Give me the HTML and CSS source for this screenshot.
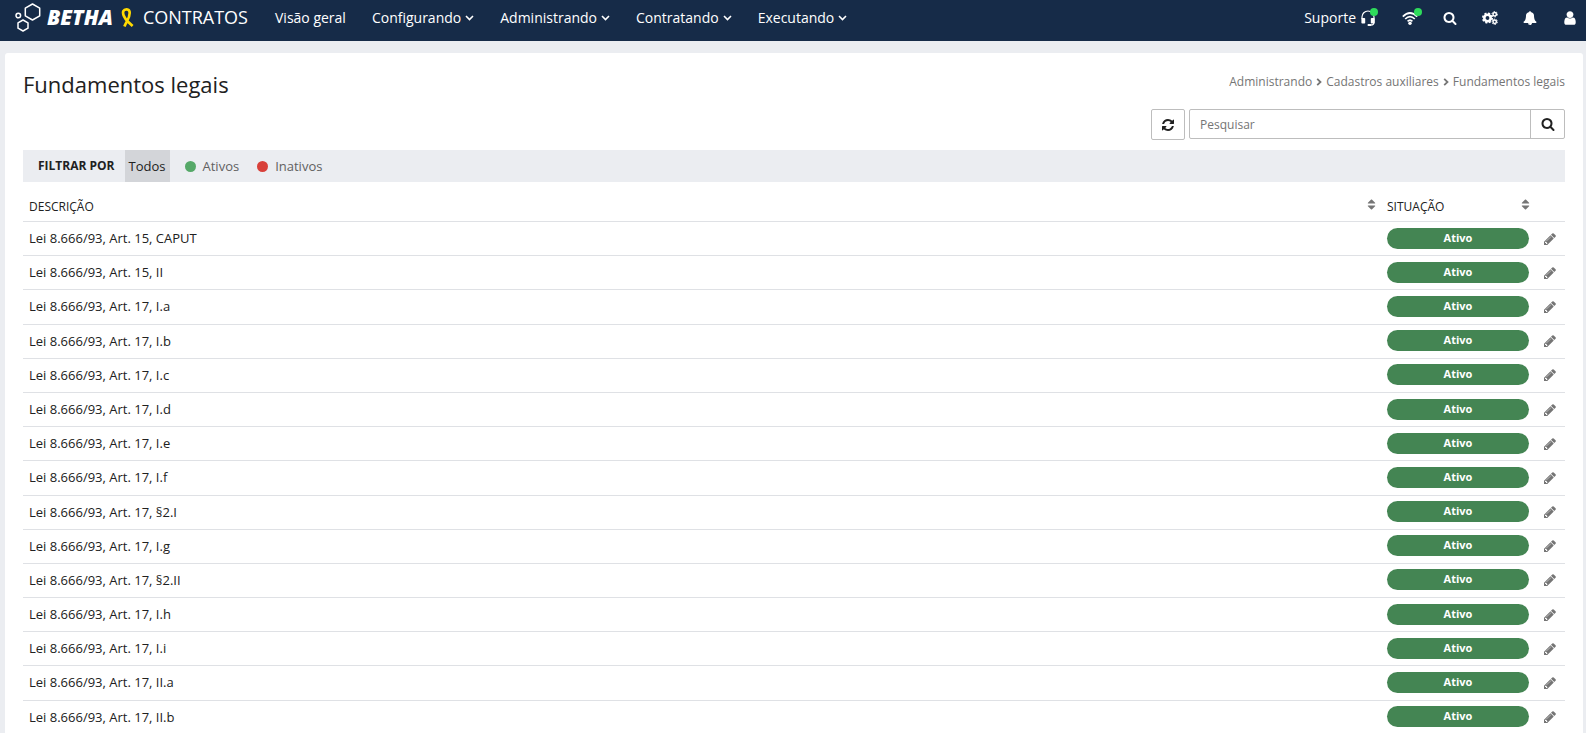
FILE: index.html
```
<!DOCTYPE html>
<html lang="pt-BR">
<head>
<meta charset="utf-8">
<title>Contratos - Fundamentos legais</title>
<link rel="stylesheet" href="styles.css">
</head>
<body>
<svg class="sprite" aria-hidden="true">
  <symbol id="i-search" viewBox="0 0 1792 1792"><path d="M1216 832q0-185-131.500-316.500t-316.500-131.500-316.500 131.500-131.500 316.500 131.500 316.500 316.500 131.500 316.500-131.500 131.500-316.500zm512 832q0 52-38 90t-90 38q-54 0-90-38l-343-342q-179 124-399 124-143 0-273.500-55.500t-225-150-150-225-55.500-273.500 55.500-273.500 150-225 225-150 273.500-55.500 273.500 55.500 225 150 150 225 55.500 273.500q0 220-124 399l343 343q37 37 37 90z"/></symbol>
  <symbol id="i-user" viewBox="0 0 1792 1792"><path d="M1536 1399q0 109-62.500 187t-150.500 78h-854q-88 0-150.500-78t-62.500-187q0-85 8.500-160.500t31.500-152 58.500-131 94-89 134.500-34.500q131 128 313 128t313-128q76 0 134.500 34.500t94 89 58.500 131 31.500 152 8.500 160.500zm-256-887q0 159-112.500 271.500t-271.500 112.500-271.500-112.500-112.500-271.500 112.500-271.500 271.500-112.500 271.500 112.500 112.500 271.500z"/></symbol>
  <symbol id="i-pencil" viewBox="0 0 1792 1792"><path d="M491 1536l91-91-235-235-91 91v107h128v128h107zm523-928q0-22-22-22-10 0-17 7l-542 542q-7 7-7 17 0 22 22 22 10 0 17-7l542-542q7-7 7-17zm-54-192l416 416-832 832h-416v-416zm683 96q0 53-37 90l-166 166-416-416 166-165q36-38 90-38 53 0 91 38l235 234q37 39 37 91z"/></symbol>
  <symbol id="i-refresh" viewBox="0 0 1792 1792"><path d="M1639 1056q0 5-1 7-64 268-268 434.500t-478 166.500q-146 0-282.500-55t-243.500-157l-129 129q-19 19-45 19t-45-19-19-45v-448q0-26 19-45t45-19h448q26 0 45 19t19 45-19 45l-137 137q71 66 161 102t187 36q134 0 250-65t186-179q11-17 53-117 8-23 30-23h192q13 0 22.500 9.500t9.500 22.500zm25-800v448q0 26-19 45t-45 19h-448q-26 0-45-19t-19-45 19-45l138-138q-148-137-349-137-134 0-250 65t-186 179q-11 17-53 117-8 23-30 23h-199q-13 0-22.500-9.500t-9.500-22.500v-7q65-268 270-434.500t480-166.500q146 0 284 55.500t245 156.500l130-129q19-19 45-19t45 19 19 45z"/></symbol>
  <symbol id="i-sort" viewBox="0 0 1792 1792"><path d="M1408 1088q0 26-19 45l-448 448q-19 19-45 19t-45-19l-448-448q-19-19-19-45t19-45 45-19h896q26 0 45 19t19 45zm0-384q0 26-19 45t-45 19h-896q-26 0-45-19t-19-45 19-45l448-448q19-19 45-19t45 19l448 448q19 19 19 45z"/></symbol>
  <symbol id="i-bell" viewBox="0 0 1792 1792"><path d="M912 1696q0-16-16-16-59 0-101.500-42.500t-42.500-101.500q0-16-16-16t-16 16q0 73 51.500 124.500t124.500 51.500q16 0 16-16zm816-288q0 52-38 90t-90 38h-448q0 106-75 181t-181 75-181-75-75-181h-448q-52 0-90-38t-38-90q50-42 91-88t85-119.500 74.500-158.500 50-206 19.500-260q0-152 117-282.500t307-158.500q-8-19-8-39 0-40 28-68t68-28 68 28 28 68q0 20-8 39 190 28 307 158.500t117 282.500q0 139 19.500 260t50 206 74.500 158.500 85 119.500 91 88z"/></symbol>
  <symbol id="i-down" viewBox="0 0 9 6"><path d="M1 1l3.500 3.500L8 1" fill="none" stroke="currentColor" stroke-width="1.600"/></symbol>
  <symbol id="i-right" viewBox="0 0 6 8"><path d="M1.200 .8L4.500 4 1.200 7.200" fill="none" stroke="currentColor" stroke-width="1.800"/></symbol>
  <symbol id="i-wifi" viewBox="0 0 16 14"><g fill="none" stroke="currentColor" stroke-width="1.700"><path d="M.8 5.600Q8-1.600 15.200 5.600"/><path d="M3.200 8Q8 3.200 12.800 8"/><path d="M5.600 10.300Q8 7.800 10.400 10.300"/></g><circle cx="8" cy="12.200" r="1.700"/></symbol>
  <symbol id="i-headset" viewBox="0 0 14 16"><path d="M1 9V7a6 6 0 0 1 12 0v5.500q0 2.500-3 2.500H7" fill="none" stroke="currentColor" stroke-width="1.200"/><rect x=".4" y="8" width="3.800" height="5.600" rx=".8"/><rect x="9.800" y="8" width="3.800" height="5.600" rx=".8"/><rect x="6.500" y="14" width="4" height="2" rx="1"/></symbol>
  <symbol id="i-cogs" viewBox="0 0 16 14"><g fill="none" stroke="currentColor"><circle cx="5.500" cy="7" r="3.200" stroke-width="2.600"/><circle cx="5.500" cy="7" r="4.700" stroke-width="1.700" stroke-dasharray="2.050 1.640"/><circle cx="12.700" cy="3.200" r="1.700" stroke-width="1.500"/><circle cx="12.700" cy="3.200" r="2.700" stroke-width="1" stroke-dasharray="1.500 1.320"/><circle cx="12.700" cy="10.800" r="1.700" stroke-width="1.500"/><circle cx="12.700" cy="10.800" r="2.700" stroke-width="1" stroke-dasharray="1.500 1.320"/></g></symbol>
</svg>

<header class="topbar">
  <a class="brand" href="#">
    <svg class="brand-mark" viewBox="0 0 26 29" aria-hidden="true"><g fill="none" stroke="#fff" stroke-width="1.500" stroke-linejoin="round"><path d="M17.500 1l7.200 4.200v7.600l-7.200 4.200-7.200-4.200V5.200z"/><path d="M8 17l5 2.800v5.400L8 28l-5-2.800v-5.400z"/><circle cx="3.300" cy="12.500" r="2.300"/></g></svg>
    <span class="brand-name">BETHA</span>
    <svg class="ribbon" viewBox="0 0 14 20" aria-hidden="true"><path d="M3.400 18.500C6 12 10 8.500 8.400 3.200 7.500.8 3.500.8 2.300 3.200 1 7 4.500 11 6.500 13.300L11.600 18" fill="none" stroke="#ffd900" stroke-width="2.700"/></svg>
    <span class="product">CONTRATOS</span>
  </a>
  <nav class="menu">
    <a href="#">Visão geral</a>
    <a href="#">Configurando <svg class="down"><use href="#i-down"/></svg></a>
    <a href="#">Administrando <svg class="down"><use href="#i-down"/></svg></a>
    <a href="#">Contratando <svg class="down"><use href="#i-down"/></svg></a>
    <a href="#">Executando <svg class="down"><use href="#i-down"/></svg></a>
  </nav>
  <div class="tools">
    <a class="support dotted" href="#">Suporte <svg class="icon-lg"><use href="#i-headset"/></svg></a>
    <button class="tool dotted" type="button" aria-label="Conexão"><svg class="icon-lg"><use href="#i-wifi"/></svg></button>
    <button class="tool" type="button" aria-label="Buscar"><svg class="icon"><use href="#i-search"/></svg></button>
    <button class="tool" type="button" aria-label="Configurações"><svg class="icon-lg"><use href="#i-cogs"/></svg></button>
    <button class="tool" type="button" aria-label="Notificações"><svg class="icon"><use href="#i-bell"/></svg></button>
    <button class="tool" type="button" aria-label="Usuário"><svg class="icon-lg"><use href="#i-user"/></svg></button>
  </div>
</header>

<main class="card">
  <div class="heading">
    <h1>Fundamentos legais</h1>
    <nav class="crumbs" aria-label="Caminho">
      <a href="#">Administrando</a><svg class="right"><use href="#i-right"/></svg><a href="#">Cadastros auxiliares</a><svg class="right"><use href="#i-right"/></svg><a href="#">Fundamentos legais</a>
    </nav>
  </div>
  <form class="search">
    <button class="refresh" type="button" aria-label="Atualizar"><svg class="icon"><use href="#i-refresh"/></svg></button>
    <div class="search-box">
      <input type="text" placeholder="Pesquisar" aria-label="Pesquisar">
      <button type="button" aria-label="Pesquisar"><svg class="icon"><use href="#i-search"/></svg></button>
    </div>
  </form>
  <div class="filter">
    <strong>FILTRAR POR</strong>
    <button class="active" type="button">Todos</button>
    <button type="button"><i class="dot green"></i>Ativos</button>
    <button type="button"><i class="dot red"></i>Inativos</button>
  </div>
  <table>
    <thead>
      <tr>
        <th><div class="sortable">DESCRIÇÃO<svg class="sort"><use href="#i-sort"/></svg></div></th>
        <th class="col-status"><div class="sortable">SITUAÇÃO<svg class="sort"><use href="#i-sort"/></svg></div></th>
        <th class="col-edit"></th>
      </tr>
    </thead>
    <tbody id="rows"></tbody>
  </table>
</main>
<script src="rows.js"></script>
</body>
</html>
```
FILE: rows.js
```
const articles = [
  "15, CAPUT", "15, II", "17, I.a", "17, I.b", "17, I.c", "17, I.d", "17, I.e", "17, I.f",
  "17, §2.I", "17, I.g", "17, §2.II", "17, I.h", "17, I.i", "17, II.a", "17, II.b"
];
document.getElementById("rows").innerHTML = articles.map(a => `
  <tr>
    <td>Lei 8.666/93, Art. ${a}</td>
    <td class="status"><span class="badge">Ativo</span></td>
    <td class="edit"><button type="button" aria-label="Editar"><svg class="icon"><use href="#i-pencil"/></svg></button></td>
  </tr>`).join("");
```
FILE: styles.css
```
* { box-sizing: border-box; }
html { background: #ebedf1; overflow: hidden; }
body {
  margin: 0;
  font: 13px/1.4 "Open Sans", "Noto Sans", sans-serif;
  color: #212121;
}
a { color: inherit; text-decoration: none; }
button { font: inherit; color: inherit; background: none; border: 0; padding: 0; cursor: pointer; }
svg { fill: currentColor; flex: none; }
.sprite { position: absolute; width: 0; height: 0; }
.icon { width: 14px; height: 14px; display: block; }
.icon-lg { width: 16px; height: 16px; display: block; }

.topbar {
  display: flex;
  align-items: center;
  height: 41px;
  padding: 0 8px 6px 15px;
  background: #162b48;
  color: #fff;
}
.brand { display: flex; align-items: center; width: 260px; }
.brand-mark { width: 26px; height: 29px; margin-right: 6px; }
.brand-name { padding-bottom: 2px; font-size: 21px; font-weight: 800; font-style: italic; line-height: 28px; }
.ribbon { width: 14px; height: 20px; margin: 0 8px; }
.product { padding-bottom: 2px; font-size: 18px; line-height: 28px; }
.menu { display: flex; gap: 26px; font-size: 14px; line-height: 20px; }
.menu a { display: flex; align-items: center; gap: 4px; white-space: nowrap; }
.down { width: 9px; height: 6px; }
.tools { display: flex; align-items: center; gap: 24px; margin-left: auto; font-size: 14px; line-height: 20px; }
.support { display: flex; align-items: center; gap: 4px; margin-right: 2px; }
.tool { width: 16px; display: flex; justify-content: center; }
.dotted { position: relative; }
.dotted::after {
  content: "";
  position: absolute;
  top: -2px;
  right: -4px;
  width: 8px;
  height: 8px;
  border-radius: 50%;
  background: #2edb5b;
}
.support::after { top: 0; right: -2px; }

.card {
  margin: 12px 3px 0 5px;
  padding: 16px 18px;
  background: #fff;
  border-radius: 3px;
}
.heading { display: flex; justify-content: space-between; align-items: flex-start; }
h1 { margin: 0; font-size: 22px; font-weight: 400; line-height: 30px; }
.crumbs { display: flex; align-items: center; gap: 4px; padding-top: 4px; font-size: 12px; line-height: 18px; color: #757575; }
.right { width: 6px; height: 8px; }

.search { display: flex; justify-content: flex-end; align-items: flex-start; gap: 4px; margin: 10px 0; }
.refresh { display: grid; place-items: center; width: 34px; height: 31px; border: 1px solid #bdbdbd; border-radius: 2px; }
.search-box { display: flex; width: 376px; height: 30px; border: 1px solid #bdbdbd; border-radius: 2px; }
.search-box input { flex: 1; min-width: 0; padding: 0 10px; border: 0; background: none; font: 12px "Open Sans", sans-serif; color: #212121; }
.search-box input::placeholder { color: #757575; opacity: 1; }
.search-box button { display: grid; place-items: center; width: 34px; border-left: 1px solid #bdbdbd; }

.filter { display: flex; align-items: stretch; height: 32px; padding-left: 15px; background: #ebedf1; color: #616161; }
.filter strong { margin-right: 10px; font-size: 12px; font-weight: 700; line-height: 32px; color: #212121; }
.filter button { display: flex; align-items: center; margin-right: 10px; padding: 0 4px; }
.filter .active { margin-right: 11px; background: #d3d5d9; color: #212121; }
.dot { width: 11px; height: 11px; margin-right: 7px; border-radius: 50%; }
.green { background: #55a868; }
.red { background: #d8403a; }

table { width: 100%; margin-top: 8px; border-collapse: separate; border-spacing: 0; table-layout: fixed; }
th { padding: 8px 3px 5px 6px; font-size: 12px; font-weight: 400; line-height: 18px; text-align: left; }
td { padding: 7px 6px 8px; }
th, td { border-bottom: 1px solid #dfe1e5; }
.col-status { width: 154px; }
.col-edit { width: 30px; }
.sortable { display: flex; justify-content: space-between; align-items: flex-start; }
.sort { width: 13px; height: 13px; color: #757575; }
.status { padding: 5px 6px 6px; }
.badge { display: block; height: 21px; border-radius: 11px; background: #448553; color: #fff; font-size: 11px; font-weight: 700; line-height: 20px; text-align: center; }
.edit { padding: 0; color: #757575; }
.edit button { display: grid; place-items: center; width: 100%; height: 32px; }
```
